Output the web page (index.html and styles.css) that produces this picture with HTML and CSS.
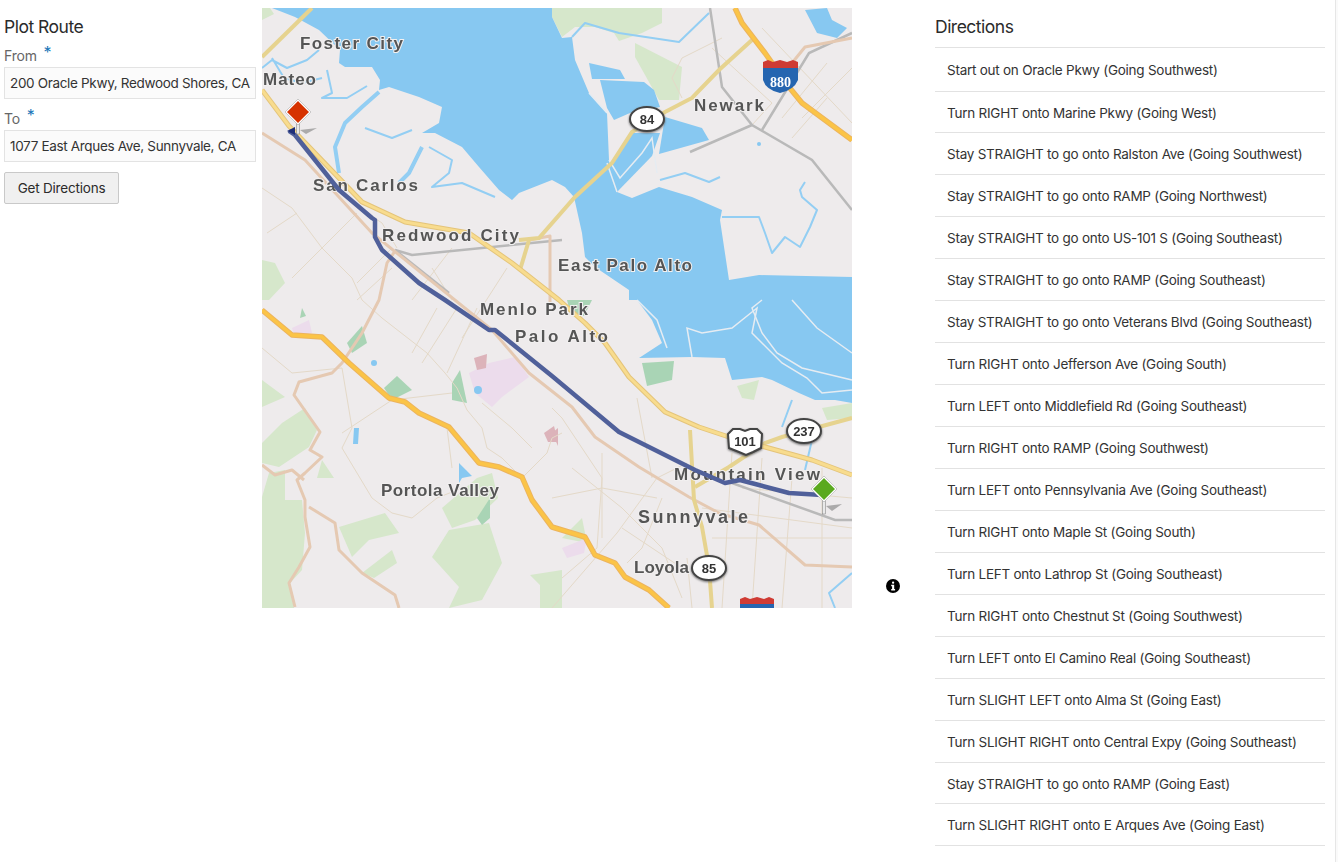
FILE: index.html
```html
<!DOCTYPE html>
<html lang="en">
<head>
    <meta charset="UTF-8">
    <title>Plot Route</title>
    <link rel="stylesheet" href="styles.css">
</head>
<body>
<div class="page">
    <!-- route form -->
    <form class="route-form">
        <h2 class="title">Plot Route</h2>
        <label class="field-label field-from">From <span class="req">*</span></label>
        <input class="field-input" type="text" value="200 Oracle Pkwy, Redwood Shores, CA">
        <label class="field-label field-to">To <span class="req">*</span></label>
        <input class="field-input" type="text" value="1077 East Arques Ave, Sunnyvale, CA">
        <button class="go-btn" type="button">Get Directions</button>
    </form>

    <!-- map, coordinates are px inside the 590x600 tile -->
    <svg class="map" viewBox="0 0 590 600" width="590" height="600">
        <defs>
            <path id="r280" d="M0 302L30 327L60 329L87 355L127 390L143 394L157 405L187 419L217 455L237 459L260 469L270 492L290 519L323 529L333 547L353 555L363 569L387 582L407 600"/>
            <path id="r880" d="M473 0L480 15L503 45L527 79L540 95L567 115L590 132"/>
            <path id="r101" d="M0 82L27 118L100 194L143 214L207 225L250 255L297 292L323 315L343 335L367 369L403 404L437 419L467 429L503 439L550 452L590 467"/>
        </defs>
        <g class="tiles">
            <rect class="land" width="590" height="600"/>

            <!-- parks -->
            <g class="park">
                <path d="M290 0H400L400 15L380 25L357 33L352 25L333 19L313 19L300 29L290 9Z"/>
                <path d="M373 35L420 59L417 92L397 92L373 49Z"/>
                <path d="M7 465L23 462L23 492L40 492L43 525L40 562L28 575L32 600L0 600L0 489Z"/>
                <path d="M0 372L23 389L0 399Z"/>
                <path d="M0 435L20 415L43 400L55 422L47 439L17 459L0 455Z"/>
                <path d="M60 452L72 470L55 470Z"/>
                <path d="M77 519L123 505L137 525L107 532L90 549Z"/>
                <path d="M100 565L130 542L135 555L112 570Z"/>
                <path d="M170 549L187 522L227 515L240 555L220 592L187 600L197 579Z"/>
                <path d="M180 500L215 470L230 465L236 490L213 512L190 520Z"/>
                <path d="M268 567L300 562L300 600L278 600L278 577Z"/>
                <path d="M0 252L13 255L23 275L7 292L0 292Z"/>
                <path d="M0 0H8L12 6L0 12Z"/>
                <path d="M475 378L497 372L492 392L480 390Z"/>
                <path d="M560 400L590 395L590 410L565 412Z"/>
                <path d="M300 530L320 510L325 535Z"/>
            </g>
            <g class="park-dark">
                <path d="M85 335L100 318L105 335L90 345Z"/>
                <path d="M122 380L135 368L150 382L130 392Z"/>
                <path d="M190 375L198 362L205 395L190 392Z"/>
                <path d="M215 510L228 490L228 510L220 517Z"/>
                <path d="M380 355L412 353L410 372L385 378Z"/>
                <path d="M305 292L330 292L322 308L308 304Z"/>
                <path d="M40 300L44 308L38 310Z"/>
            </g>
            <g class="campus">
                <path d="M207 365L227 355L253 349L267 369L240 389L230 399L213 385Z"/>
                <path d="M30 320L47 312L50 325L33 330Z"/>
                <path d="M300 540L325 530L322 545L305 550Z"/>
            </g>
            <g class="campus-red">
                <path d="M212 350L225 346L224 360L215 362Z"/>
                <path d="M282 425L292 418L296 434L286 434Z"/>
                <path d="M290 425L296 420L296 438Z"/>
            </g>

            <!-- water -->
            <g class="water">
                <path d="M10 0H290V9L300 30L310 29L313 52L327 85L345 105L347 152L355 184L370 190L397 179L430 189L460 202L458 212L467 272L497 267L590 269V395L573 392L553 392L537 385L510 372L500 369L470 372L463 350L430 349L377 350L400 335L390 312L375 292L367 292L367 282L333 259L323 249L320 225L312 189L303 179L290 172L257 185L250 192L237 182L217 159L200 139L173 125L160 125L177 115L180 99L157 89L127 79L117 82L118 72L110 59L83 59L77 55L78 42L57 22L33 9Z"/>
                <path d="M327 55L358 62L363 71L330 71Z"/>
                <path d="M338 72L382 74L392 82L398 99L368 105L352 112L345 100Z"/>
                <path d="M370 125L398 125L390 148L355 184L347 158Z"/>
                <path d="M403 109L440 120L447 132L397 146Z"/>
                <path d="M543 2L565 0L570 12L585 20L575 30L555 25Z"/>
                <circle cx="497" cy="136" r="2"/>
                <circle cx="112" cy="355" r="3"/>
                <circle cx="216" cy="382" r="4"/>
                <path d="M92 420L97 420L96 436L91 436Z"/>
                <path d="M197 455L204 462L210 468L200 470L197 475Z"/>
            </g>
            <g class="channel">
                <path d="M0 60L10 52L25 60L45 52L57 42M10 50L22 70L40 75L60 70"/>
                <path d="M65 62L70 85L60 90L85 90L105 78M103 120L130 130L150 122"/>
                <path d="M398 172L423 165L447 174L458 169M460 209L497 209L503 225L510 245L523 229L538 239L548 219L555 202L540 189L538 182L543 174"/>
                <path d="M310 29L323 15L357 25L417 34L447 5"/>
                <path d="M530 392L520 419M543 462L553 419M590 565L567 585L573 600"/>
                <path d="M167 139L190 152L187 165L170 179L200 175L233 189"/>
            </g>
            <g class="channel-wide">
                <path d="M77 165L73 139L83 115L100 99L117 84"/>
                <path d="M160 139L147 165L137 175"/>
            </g>
            <g class="marsh">
                <path d="M375 292L395 312L405 340M430 349L425 320L440 325L470 320L495 300L490 325L520 355L545 370L560 385L590 382"/>
                <path d="M500 292L490 300L500 325L515 345L540 360L590 372M530 292L555 320L590 345"/>
                <path d="M347 152L358 170L380 145L390 130L395 165M327 85L345 105M355 184L345 155"/>
            </g>

            <!-- streets -->
            <g class="street">
                <path d="M0 180L30 200L60 240L90 270L100 292L120 310L165 345L183 365L195 380L205 402L220 420L225 440"/>
                <path d="M35 205L5 225M60 240L30 270M95 205L60 240M130 240L95 275M190 240L150 292M245 260L200 330M175 300L150 345M195 300L160 355M215 300L185 365"/>
                <path d="M0 340L30 365L80 360M80 360L90 420L80 440L110 490L130 505L150 510L175 490L200 480M80 425L130 392M130 392L190 385"/>
                <path d="M185 420L190 460M225 440L240 450L260 470L285 445L290 430L300 425M220 395L250 420L270 440"/>
                <path d="M290 400L300 410L320 440L340 470L335 540L300 570M310 460L360 500L400 540L420 590"/>
                <path d="M340 445V530M375 390L390 470M400 490L380 540L365 555M290 490L340 480L395 490"/>
                <path d="M470 445L460 600M500 450L490 600M530 470L520 600M560 460V600M450 530H590M440 500L590 520M480 480L590 490"/>
                <path d="M460 30L420 50L410 70L420 90M450 40L510 95L490 117M500 20L590 115M540 110L590 60M565 55L520 110M565 90L530 130"/>
                <path d="M130 260L95 292M90 195L120 215L135 240M170 260L190 292"/>
                <path d="M425 455L395 470L355 525M360 520L420 560M425 550L430 600M355 525L290 600"/>
            </g>

            <!-- roads -->
            <g class="grey-road">
                <path d="M448 0L460 79L490 117L550 152L590 202"/>
                <path d="M428 144L490 117"/>
                <path d="M500 122L547 45L590 25"/>
                <path d="M133 242L150 247L300 232"/>
                <path d="M133 242L187 285"/>
                <path d="M470 475L573 512L590 512"/>
            </g>
            <g class="peach-road">
                <path d="M0 125L43 152L110 225L230 322L267 365L310 399L333 429L377 459L427 489L457 505L497 517L543 557L590 559"/>
                <path d="M133 243L125 255L117 292L100 325L80 355L70 365L37 374L32 387L58 424L48 442L60 449L43 465L35 472L43 492L43 509L48 539L37 559L27 575L33 599"/>
                <path d="M0 457L13 467L30 462L42 472M47 499L73 515L77 542L100 565L133 587L137 600"/>
                <path d="M590 30L543 39L530 55"/>
                <path d="M267 232L288 228L288 295"/>
            </g>
            <g class="pale-road">
                <path d="M50 0L0 49"/>
                <path d="M490 32L457 62L430 90L403 104L370 124L350 155L313 189L277 230L257 232"/>
                <path d="M267 232L258 262"/>
                <path d="M428 422L432 492L440 519L447 559L450 600"/>
                <path d="M590 410L520 429L503 435L467 459L433 479"/>
            </g>
            <use class="yellow-case" href="#r101"/>
            <use class="yellow-road" href="#r101"/>
            <use class="orange-case" href="#r280"/>
            <use class="orange-road" href="#r280"/>
            <use class="orange-case" href="#r880"/>
            <use class="orange-road" href="#r880"/>

            <!-- place names -->
            <g class="place">
                <text x="38" y="41" textLength="103">Foster City</text>
                <text x="1" y="77" textLength="53">Mateo</text>
                <text x="51" y="183" textLength="105">San Carlos</text>
                <text x="120" y="233" textLength="137">Redwood City</text>
                <text x="432" y="103" textLength="70">Newark</text>
                <text x="296" y="263" textLength="134">East Palo Alto</text>
                <text x="218" y="307" textLength="108">Menlo Park</text>
                <text x="253" y="334" textLength="93">Palo Alto</text>
                <text x="119" y="488" textLength="118">Portola Valley</text>
                <text x="412" y="472" textLength="146">Mountain View</text>
                <text class="place-big" x="376" y="515" textLength="110">Sunnyvale</text>
                <text x="372" y="565" textLength="55">Loyola</text>
            </g>

            <!-- highway shields -->
            <g class="shield-round">
                <ellipse cx="385" cy="111" rx="17" ry="12"/>
                <ellipse cx="542" cy="423" rx="17" ry="12"/>
                <ellipse cx="447" cy="560" rx="17" ry="12"/>
            </g>
            <path class="shield-us" d="M466 426L471 421H478L483 423L488 421H495L500 426L499 440L491 444L484 447L477 444L467 440Z"/>
            <g class="shield-text">
                <text x="385" y="115.500">84</text>
                <text x="542" y="427.500">237</text>
                <text x="447" y="564.500">85</text>
                <text x="483" y="438">101</text>
            </g>
            <path class="i-blue" d="M501 58H536V72Q532 82 518 85Q504 82 501 72Z"/>
            <path class="i-red" d="M501 54L506 52L511 54L518 52L525 54L531 52L536 54V60H501Z"/>
            <text class="i-text" x="518.500" y="79">880</text>
            <path class="i-blue" d="M478 596H512V600H478Z"/>
            <path class="i-red" d="M478 591L483 589L488 591L495 589L502 591L507 589L512 591V596H478Z"/>

            <!-- route line and flags -->
            <path class="route" d="M27 123L33 127L77 182L110 210L113 212L113 229L120 242L157 275L183 292L227 322L233 322L290 368L357 424L433 462L463 475L478 472L527 485L560 487"/>
            <path class="route-dot" d="M25 123L33 119L33 127Z"/>
            <path class="flag-shadow" d="M38 122L55 120L44 126Z"/>
            <path class="flag-shadow" d="M564 498L580 496L570 503Z"/>
            <rect class="flag-pole" x="34.500" y="112" width="3" height="14"/>
            <rect class="flag-pole" x="560.500" y="492" width="3" height="14"/>
            <path class="flag-red" d="M36 92L48 104L36 116L24 104Z"/>
            <path class="flag-green" d="M562 469L574 481L562 493L550 481Z"/>
        </g>
    </svg>

    <!-- info icon -->
    <svg class="info-icon" viewBox="0 0 14 14" width="14" height="14">
        <circle cx="7" cy="7" r="7"/>
        <rect class="info-mark" x="6" y="2.500" width="2.200" height="2.200" rx="1"/>
        <path class="info-mark" d="M5.200 5.800H8.200V10H9.100V11.400H5.200V10H6.100V7.200H5.200Z"/>
    </svg>

    <!-- turn by turn list -->
    <section class="directions">
        <h2 class="title title-dir">Directions</h2>
        <ul class="step-list">
            <li class="step step-first">Start out on Oracle Pkwy (Going Southwest)</li>
            <li class="step">Turn RIGHT onto Marine Pkwy (Going West)</li>
            <li class="step">Stay STRAIGHT to go onto Ralston Ave (Going Southwest)</li>
            <li class="step">Stay STRAIGHT to go onto RAMP (Going Northwest)</li>
            <li class="step">Stay STRAIGHT to go onto US-101 S (Going Southeast)</li>
            <li class="step">Stay STRAIGHT to go onto RAMP (Going Southeast)</li>
            <li class="step">Stay STRAIGHT to go onto Veterans Blvd (Going Southeast)</li>
            <li class="step">Turn RIGHT onto Jefferson Ave (Going South)</li>
            <li class="step">Turn LEFT onto Middlefield Rd (Going Southeast)</li>
            <li class="step">Turn RIGHT onto RAMP (Going Southwest)</li>
            <li class="step">Turn LEFT onto Pennsylvania Ave (Going Southeast)</li>
            <li class="step">Turn RIGHT onto Maple St (Going South)</li>
            <li class="step">Turn LEFT onto Lathrop St (Going Southeast)</li>
            <li class="step">Turn RIGHT onto Chestnut St (Going Southwest)</li>
            <li class="step">Turn LEFT onto El Camino Real (Going Southeast)</li>
            <li class="step">Turn SLIGHT LEFT onto Alma St (Going East)</li>
            <li class="step">Turn SLIGHT RIGHT onto Central Expy (Going Southeast)</li>
            <li class="step">Stay STRAIGHT to go onto RAMP (Going East)</li>
            <li class="step">Turn SLIGHT RIGHT onto E Arques Ave (Going East)</li>
        </ul>
    </section>
</div>
</body>
</html>
```

FILE: styles.css
```css
html,body{margin:0;padding:0;height:100%;overflow:hidden;}
body{
    background:#fafafa;
    font-family:Inter,"Liberation Sans",sans-serif;
    font-size:14px;
    color:#333;
}
.page{
    display:flex;
    align-items:flex-start;
    width:1335px;
    height:862px;
    background:#fff;
    border-right:1px solid #e6e6e6;
}
.route-form{
    display:flex;
    flex-direction:column;
    align-items:flex-start;
    width:252px;
    margin:0 6px 0 4px;
}
.title{
    margin:0;
    padding-top:16px;
    height:31px;
    box-sizing:content-box;
    font-size:17.500px;
    font-weight:400;
    letter-spacing:-.5px;
    line-height:22px;
    color:#2b2b2b;
}
.field-label{color:#666;line-height:20px;height:20px;letter-spacing:-.2px;}
.field-from{margin-top:-2px;}
.field-to{margin-top:9px;}
.req{
    position:relative;
    top:-3px;
    margin-left:3px;
    font-size:16px;
    color:#1a76b8;
}
.field-input{
    box-sizing:border-box;
    width:252px;
    height:32px;
    margin:2px 0 0;
    padding:0 0 0 5px;
    border:1px solid #e3e3e3;
    background:#fbfbfb;
    font:13.500px Inter,"Liberation Sans",sans-serif;
    letter-spacing:-.33px;
    color:#333;
}
.go-btn{
    box-sizing:border-box;
    width:115px;
    height:32px;
    margin-top:10px;
    padding:0;
    border:1px solid #c9c9c9;
    border-radius:2px;
    background:#f0f0f0;
    font:13.500px Inter,"Liberation Sans",sans-serif;
    letter-spacing:-.2px;
    color:#2b2b2b;
}

.map{display:block;flex:none;margin-top:8px;}
.tiles{filter:blur(.4px);}
.land{fill:#eeebec;}
.park path{fill:#d6e7cb;}
.park-dark path{fill:#a9d4b5;}
.campus path{fill:#ecdcec;}
.campus-red path{fill:#dcb3ba;}
.water{fill:#87c8f1;}
.channel path{fill:none;stroke:#93cef3;stroke-width:2;stroke-linejoin:round;}
.channel-wide path{fill:none;stroke:#93cef3;stroke-width:4;stroke-linejoin:round;}
.marsh path{fill:none;stroke:#e6ecf2;stroke-width:1.500;}
.street path{fill:none;stroke:#e4d9c8;stroke-width:1;}
.grey-road path{fill:none;stroke:#b9b9b9;stroke-width:2.500;}
.peach-road path{fill:none;stroke:#e5c9b2;stroke-width:3;stroke-linejoin:round;}
.pale-road path{fill:none;stroke:#e6d38f;stroke-width:4;}
.yellow-case{fill:none;stroke:#e4c47a;stroke-width:5;stroke-linejoin:round;}
.yellow-road{fill:none;stroke:#f8dc8e;stroke-width:3;stroke-linejoin:round;}
.orange-case{fill:none;stroke:#ecb45e;stroke-width:5.500;stroke-linejoin:round;}
.orange-road{fill:none;stroke:#fbc447;stroke-width:3.500;stroke-linejoin:round;}
.place text{
    font-family:"Liberation Sans",sans-serif;
    font-size:17px;
    font-weight:700;
    fill:#555;
    stroke:#f2f0f0;
    stroke-width:2px;
    paint-order:stroke;
}
.place .place-big{font-size:18px;}
.shield-round ellipse,.shield-us{fill:#fff;stroke:#444;stroke-width:2;filter:drop-shadow(0 1px 1px #666);}
.shield-text text{
    font-family:"Liberation Sans",sans-serif;
    font-size:13px;
    font-weight:700;
    fill:#333;
    text-anchor:middle;
}
.i-blue{fill:#2565b0;}
.i-red{fill:#cf3b34;}
.i-text{
    font-family:"Liberation Serif",serif;
    font-size:14px;
    font-weight:700;
    fill:#fff;
    text-anchor:middle;
}
.route{fill:none;stroke:#50609a;stroke-width:4.500;stroke-linejoin:round;}
.route-dot{fill:#1f2f78;}
.flag-shadow{fill:#8f8f8f;opacity:.7;}
.flag-pole{fill:#e9e9e9;stroke:#777;stroke-width:.5;}
.flag-red{fill:#d63200;stroke:#fff;stroke-width:1.500;filter:drop-shadow(0 0 .5px #333);}
.flag-green{fill:#5aa91f;stroke:#fff;stroke-width:1.500;filter:drop-shadow(0 0 .5px #333);}

.info-icon{flex:none;margin:579px 0 0 34px;}
.info-mark{fill:#fff;}

.directions{flex:none;width:390px;margin-left:35px;}
.step-list{margin:0;padding:0;list-style:none;border-top:1px solid #e2e2e2;}
.step{
    box-sizing:border-box;
    height:41.950px;
    padding:0 0 0 12px;
    border-bottom:1px solid #e2e2e2;
    font-size:13.500px;
    letter-spacing:-.25px;
    line-height:42px;
    white-space:nowrap;
}
.step-first{height:43.500px;line-height:44px;}
```
